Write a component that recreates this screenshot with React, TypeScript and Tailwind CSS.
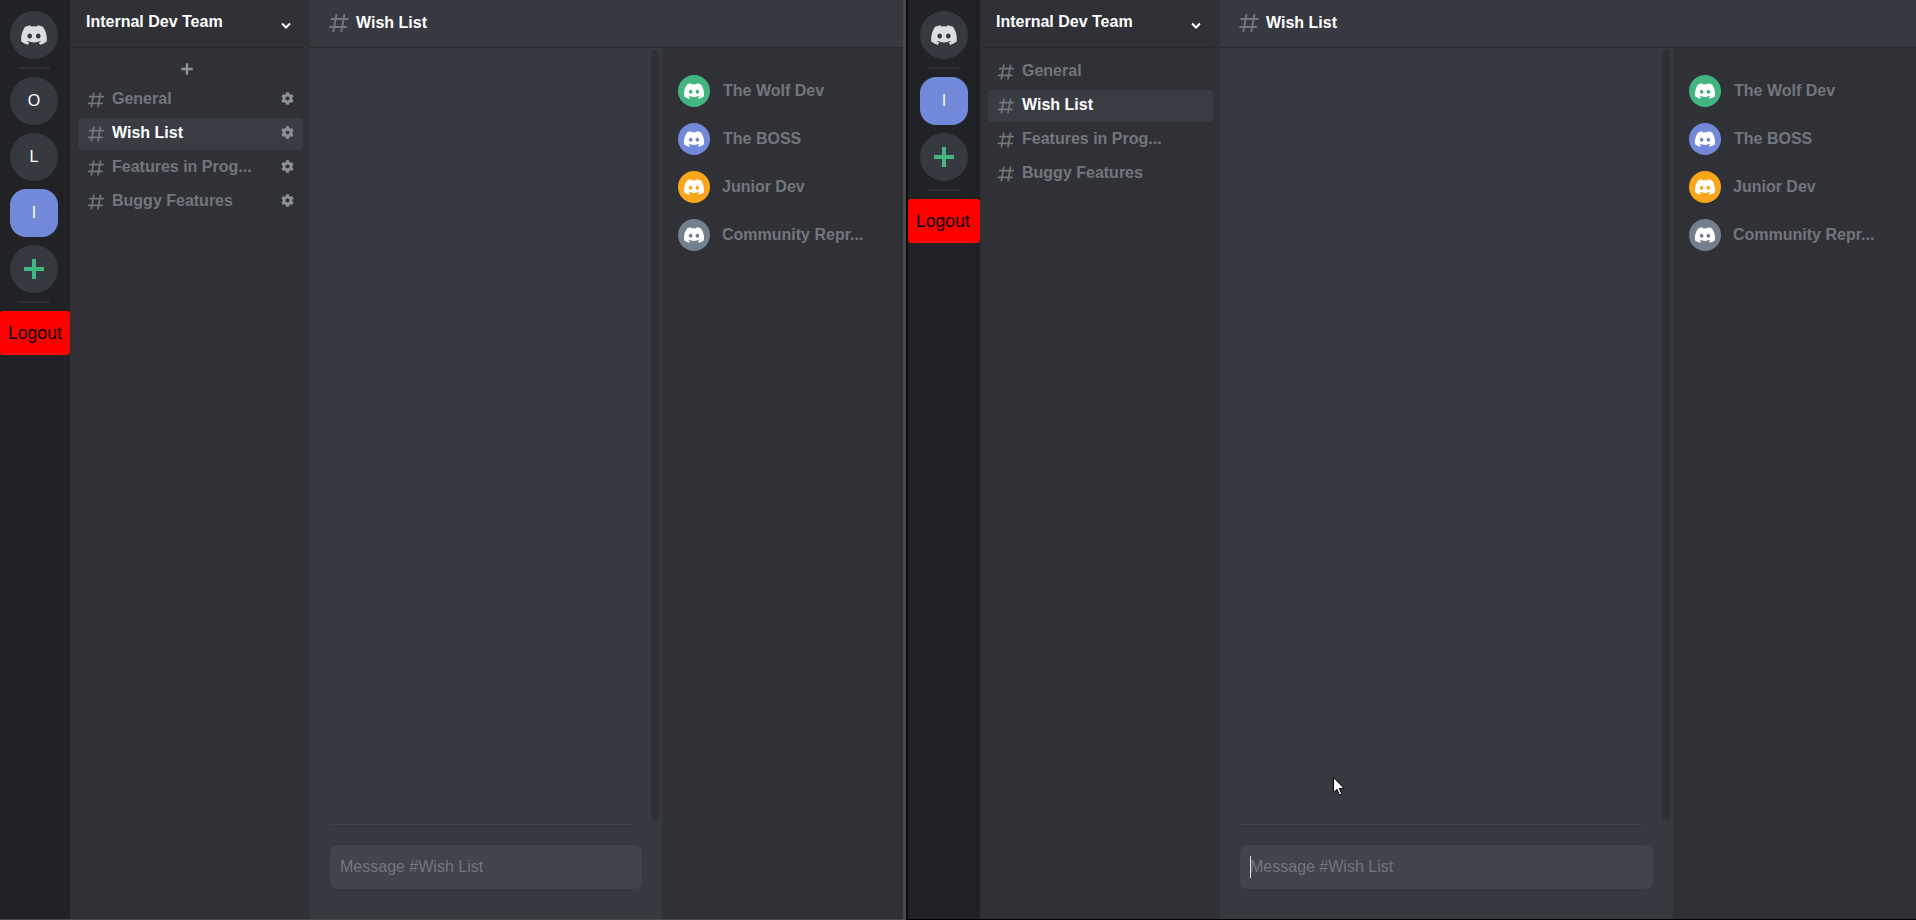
import React from 'react';
import { FaDiscord, FaCog } from 'react-icons/fa';

const font = "font-['Liberation_Sans',Arial,sans-serif]";

const channels = ['General', 'Wish List', 'Features in Prog...', 'Buggy Features'];

const members = [
  { name: 'The Wolf Dev', color: 'bg-[#43b581]', gap: 'ml-[13px]' },
  { name: 'The BOSS', color: 'bg-[#7289da]', gap: 'ml-[13px]' },
  { name: 'Junior Dev', color: 'bg-[#faa61a]', gap: 'ml-3' },
  { name: 'Community Repr...', color: 'bg-[#747f8d]', gap: 'ml-3' },
];

function Hash({ size }: { size: number }) {
  return (
    <svg width={size} height={size} viewBox="0 0 24 24" className="shrink-0 text-[#72767d]" fill="currentColor">
      <path
        fillRule="evenodd"
        d="M5.88657 21C5.57547 21 5.3399 20.7189 5.39427 20.4126L6.00001 17H2.59511C2.28449 17 2.04905 16.7198 2.10259 16.4138L2.27759 15.4138C2.31946 15.1746 2.52722 15 2.77011 15H6.35001L7.41001 9H4.00511C3.69449 9 3.45905 8.71977 3.51259 8.41381L3.68759 7.41381C3.72946 7.17456 3.93722 7 4.18011 7H7.76001L8.39677 3.41262C8.43914 3.17391 8.64664 3 8.88907 3H9.87344C10.1845 3 10.4201 3.28107 10.3657 3.58738L9.76001 7H15.76L16.3968 3.41262C16.4391 3.17391 16.6466 3 16.8891 3H17.8734C18.1845 3 18.4201 3.28107 18.3657 3.58738L17.76 7H21.1649C21.4755 7 21.711 7.28023 21.6574 7.58619L21.4824 8.58619C21.4406 8.82544 21.2328 9 20.9899 9H17.41L16.35 15H19.7549C20.0655 15 20.301 15.2802 20.2474 15.5862L20.0724 16.5862C20.0306 16.8254 19.8228 17 19.5799 17H16L15.3632 20.5874C15.3209 20.8261 15.1134 21 14.8709 21H13.8866C13.5755 21 13.3399 20.7189 13.3943 20.4126L14 17H8.00001L7.36325 20.5874C7.32088 20.8261 7.11337 21 6.87094 21H5.88657ZM9.41045 9L8.35045 15H14.3504L15.4104 9H9.41045Z"
      />
    </svg>
  );
}

function PlusIcon({ size, className }: { size: number; className: string }) {
  return (
    <svg width={size} height={size} viewBox="0 0 24 24" className={className} fill="currentColor">
      <path d="M10 2h4v8h8v4h-8v8h-4v-8H2v-4h8z" />
    </svg>
  );
}

function Rail({ servers, width, inset }: { servers: string[]; width: string; inset: string }) {
  return (
    <div className={`${width} shrink-0 bg-[#202225] flex flex-col pt-[11px]`}>
      <div className={`flex flex-col items-center ${inset}`}>
        <div className="w-12 h-12 rounded-full bg-[#36393f] flex items-center justify-center text-[#dcddde]">
          <FaDiscord size={28} />
        </div>
        <div className="w-8 h-0.5 bg-[#2d2f32] mt-2 mb-[8px] rounded" />
        <div className="flex flex-col gap-2">
          {servers.map((s) => (
            <div
              key={s}
              className={`w-12 h-12 flex items-center justify-center text-base text-white ${
                s === 'I' ? 'bg-[#7289da] rounded-2xl' : 'bg-[#36393f] rounded-full'
              }`}
            >
              {s}
            </div>
          ))}
          <div className="w-12 h-12 rounded-full bg-[#36393f] flex items-center justify-center">
            <PlusIcon size={24} className="text-[#43b581]" />
          </div>
        </div>
        <div className="w-8 h-0.5 bg-[#2d2f32] mt-2 mb-[8px] rounded" />
      </div>
      <button className="w-full h-11 bg-[#ff0000] rounded-[3px] text-[17.6px] text-black pl-[8px] text-left">Logout</button>
    </div>
  );
}

function ChannelList({ selected, admin }: { selected: string; admin: boolean }) {
  return (
    <div className="w-[240px] shrink-0 bg-[#2f3136] flex flex-col">
      <div className="h-[48px] shrink-0 mr-1.5 border-b border-[#26282c] pl-4 pr-[11px] flex items-start justify-between">
        <span className="text-base font-bold text-white mt-[13px] leading-[18px]">Internal Dev Team</span>
        <svg width="12" height="8" viewBox="0 0 12 8" className="mt-[22px] mr-[1px] text-white" fill="none" stroke="currentColor" strokeWidth="2">
          <path d="M2 1.5 6 5.5 10 1.5" />
        </svg>
      </div>
      <div className={`pl-2 pr-[7px] flex flex-col ${admin ? 'pt-[14px]' : 'pt-[8px]'}`}>
        {admin && (
          <div className="h-[14px] mb-[8px] pr-[8px] flex justify-center items-center">
            <PlusIcon size={14} className="text-[#8e9297]" />
          </div>
        )}
        <div className="flex flex-col gap-0.5">
          {channels.map((c) => (
            <div
              key={c}
              className={`h-8 rounded pl-2 pr-[9px] flex items-center ${c === selected ? 'bg-[#393c43]' : ''}`}
            >
              <span className="flex"><Hash size={20} /></span>
              <span className={`ml-[6px] text-base font-bold whitespace-nowrap -mt-[2px] ${c === selected ? 'text-white' : 'text-[#72767d]'}`}>
                {c}
              </span>
              {admin && <FaCog size={13} className="ml-auto text-[#8e9297] -mt-[3px]" />}
            </div>
          ))}
        </div>
      </div>
    </div>
  );
}

function MemberList({ width }: { width: string }) {
  return (
    <div className={`${width} shrink-0 bg-[#2f3136] pt-[27px] pl-4 flex flex-col gap-4`}>
      {members.map((m) => (
        <div key={m.name} className="h-8 flex items-center">
          <div className={`w-8 h-8 rounded-full ${m.color} flex items-center justify-center text-white shrink-0`}>
            <FaDiscord size={22} />
          </div>
          <span className={`${m.gap} text-base font-bold text-[#72767d] whitespace-nowrap -mt-[1px]`}>{m.name}</span>
        </div>
      ))}
    </div>
  );
}

function Pane({
  servers,
  admin,
  railWidth,
  inset,
  memberWidth,
  focused,
}: {
  servers: string[];
  admin: boolean;
  railWidth: string;
  inset: string;
  memberWidth: string;
  focused: boolean;
}) {
  return (
    <div className="flex-1 min-w-0 flex h-full">
      <Rail servers={servers} width={railWidth} inset={inset} />
      <ChannelList selected="Wish List" admin={admin} />
      <div className="flex-1 min-w-0 flex flex-col bg-[#36393f]">
        <div className="h-[48px] shrink-0 border-b border-[#26282c] pl-[17px] flex items-center gap-[5px]">
          <span className="-mt-[1px] flex"><Hash size={24} /></span>
          <span className="text-base font-bold text-white -mt-[2px]">Wish List</span>
        </div>
        <div className="flex-1 min-h-0 flex">
          <div className="flex-1 min-w-0 flex">
            <div className="flex-1 min-w-0 flex flex-col pl-5">
              <div className="flex-1" />
              <div className="h-px bg-[#40434a] mr-[10px] mb-5" />
              <div className="relative h-11 bg-[#40444b] rounded-lg pl-[10px] flex items-center text-base text-[#72767d] mb-[30px]">
                {focused && <span className="absolute left-[10px] top-[11px] w-px h-[22px] bg-[#dcddde]" />}
                Message #Wish List
              </div>
            </div>
            <div className="w-2 ml-[9px] mr-[3px] shrink-0 mt-[2px] mb-[98px] rounded-lg bg-[#2e3035]" />
          </div>
          <MemberList width={memberWidth} />
        </div>
      </div>
    </div>
  );
}

export default function App() {
  return (
    <div className={`${font} relative flex w-[1916px] h-[920px] overflow-hidden bg-[#202225]`}>
      <div className="w-[903px] shrink-0 h-full flex flex-col">
        <div className="flex-1 min-h-0">
          <Pane servers={['O', 'L', 'I']} admin railWidth="w-[70px]" inset="pr-[2px]" memberWidth="w-[241px]" focused={false} />
        </div>
        <div className="h-px shrink-0 bg-[#4a4a4a]" />
      </div>
      <div className="w-[3px] shrink-0 bg-[#4a4a4a]" />
      <div className="w-[2px] shrink-0 bg-[#0d0a0a]" />
      <div className="flex-1 min-w-0 h-full flex flex-col">
        <div className="flex-1 min-h-0">
          <Pane servers={['I']} admin={false} railWidth="w-[72px]" inset="" memberWidth="w-[243px]" focused />
        </div>
        <div className="h-px shrink-0 bg-black" />
      </div>
      {/* mouse pointer caught in the capture */}
      <svg width="12" height="19" viewBox="0 0 12 19" className="absolute left-[1333px] top-[777px]">
        <path d="M.5.5v15l3.5-3.2 2.4 5.6 2.3-1-2.4-5.5h4.8z" fill="#fff" stroke="#000" strokeWidth="1" />
      </svg>
    </div>
  );
}
